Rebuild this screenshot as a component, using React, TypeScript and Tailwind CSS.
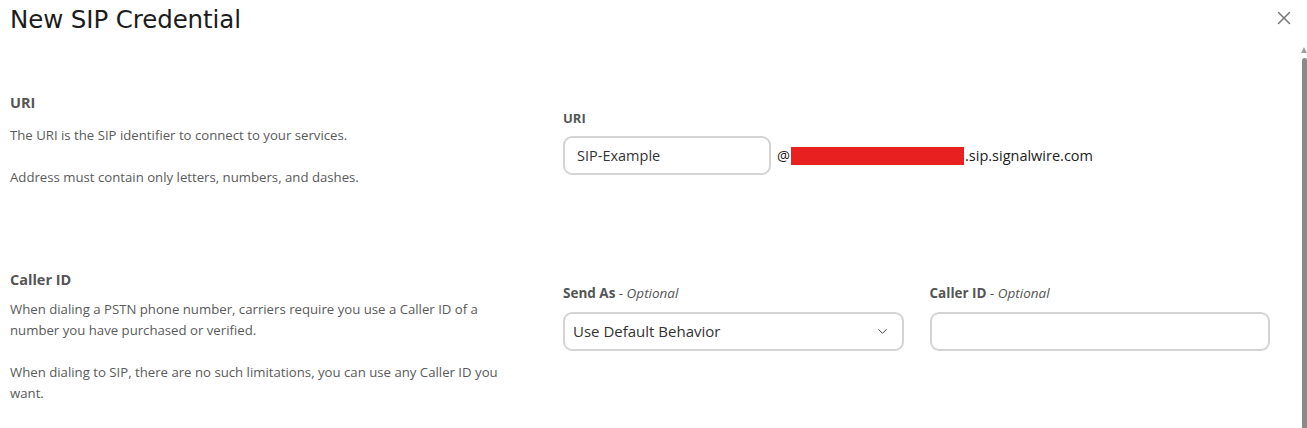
import { ChevronDown, X } from "lucide-react";

const body = "font-['Open_Sans','Noto_Sans',sans-serif]";

export default function App() {
	return (
		<div className={`relative h-[428px] w-[1307px] overflow-hidden bg-white ${body}`}>
			{/* Header */}
			<div className="flex items-start justify-between pl-[10px] pr-[12px] pt-[3px]">
				<h1 className="font-['DejaVu_Sans',sans-serif] text-[24.5px] leading-[34px] tracking-[-0.1px] text-[#1c1c1c]">
					New SIP Credential
				</h1>
				<button className="mt-[4px] text-[#777]">
					<X size={22} strokeWidth={1.6} />
				</button>
			</div>

			{/* Scrollbar */}
			<div className="absolute right-0 top-[47px] flex w-[6px] flex-col items-end gap-[5px]">
				<div className="h-0 w-0 border-x-[3px] border-b-[6px] border-x-transparent border-b-[#a0a0a0]" />
				<div className="h-[380px] w-[5px] rounded-t-[3px] bg-[#8a8a8a]" />
			</div>

			{/* URI section */}
			<div className="mt-[56px] flex pl-[10px]">
				<div className="w-[553px]">
					<h2 className="text-[14.5px] font-bold leading-[20px] text-[#555]">URI</h2>
					<p className="mt-[12px] text-[13.2px] leading-[21px] text-[#5a5a5a]">
						The URI is the SIP identifier to connect to your services.
					</p>
					<p className="mt-[21px] text-[13.2px] leading-[21px] text-[#5a5a5a]">
						Address must contain only letters, numbers, and dashes.
					</p>
				</div>
				<div className="pt-[16px]">
					<label className="block text-[13px] font-bold leading-[18px] text-[#555]">URI</label>
					<div className="mt-[9px] flex items-center">
						<input
							defaultValue="SIP-Example"
							className="h-[39px] w-[208px] rounded-[9px] border-2 border-[#d4d4d4] px-[12px] text-[14.5px] text-[#333] outline-none"
						/>
						<span className="ml-[6px] flex items-center text-[14.5px] text-[#222]">
							@
							<span className="mx-[1px] inline-block h-[18px] w-[173px] bg-[#e8201f]" />
							.sip.signalwire.com
						</span>
					</div>
				</div>
			</div>

			{/* Caller ID section */}
			<div className="mt-[82px] flex pl-[10px]">
				<div className="w-[553px]">
					<h2 className="text-[14.5px] font-bold leading-[20px] text-[#555]">Caller ID</h2>
					<p className="mt-[9px] w-[500px] text-[13.2px] leading-[21px] text-[#5a5a5a]">
						When dialing a PSTN phone number, carriers require you use a Caller ID of a number you have
						purchased or verified.
					</p>
					<p className="mt-[21px] w-[500px] text-[13.2px] leading-[21px] text-[#5a5a5a]">
						When dialing to SIP, there are no such limitations, you can use any Caller ID you want.
					</p>
				</div>
				<div className="grid w-[707px] grid-cols-2 gap-[26px] pt-[14px]">
					<div>
						<label className="block text-[13.5px] leading-[18px] text-[#555]">
							<span className="font-bold">Send As</span>
							<span className="italic"> - Optional</span>
						</label>
						<div className="mt-[10px] flex h-[39px] items-center justify-between rounded-[9px] border-2 border-[#d4d4d4] pl-[8px] pr-[12px] text-[15px] text-[#333]">
							<span>Use Default Behavior</span>
							<ChevronDown size={15} strokeWidth={1.6} className="text-[#444]" />
						</div>
					</div>
					<div>
						<label className="block text-[13.5px] leading-[18px] text-[#555]">
							<span className="font-bold">Caller ID</span>
							<span className="italic"> - Optional</span>
						</label>
						<input className="mt-[10px] h-[39px] w-full rounded-[9px] border-2 border-[#d4d4d4] px-[12px] text-[14.5px] outline-none" />
					</div>
				</div>
			</div>
		</div>
	);
}
